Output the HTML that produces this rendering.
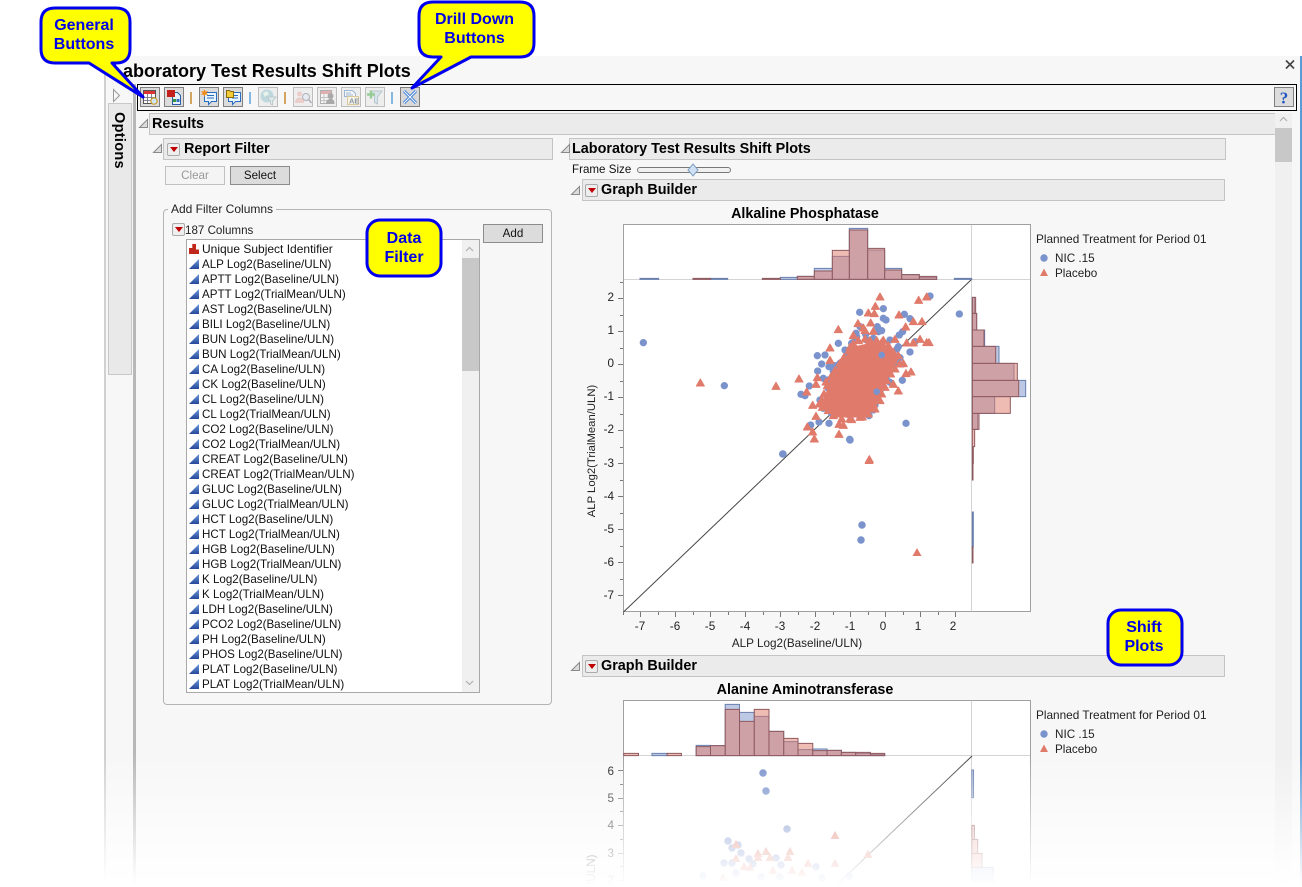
<!DOCTYPE html>
<html><head><meta charset="utf-8"><title>Laboratory Test Results Shift Plots</title>
<style>
html,body{margin:0;padding:0;background:#fff}
body{width:1302px;height:887px;overflow:hidden;position:relative;font:11.6px "Liberation Sans",sans-serif;color:#111}
.a{position:absolute;box-sizing:border-box}
.bar{position:absolute;box-sizing:border-box;background:#ebebeb;border:1px solid #c4c4c4;font-weight:bold;font-size:14.4px;line-height:21px;color:#000;white-space:nowrap}
.rb{position:absolute;width:13px;height:13px;box-sizing:border-box;background:#eee;border:1px solid #aaa;border-radius:2px}
.rb:after{content:"";position:absolute;left:1.5px;top:3px;border:4px solid transparent;border-top:5px solid #c00000;border-bottom:0}
.btn{position:absolute;box-sizing:border-box;text-align:center;font-size:11.6px;line-height:17px;background:#dcdcdc;border:1px solid #8c8c8c;color:#111}
ul{list-style:none;margin:0;padding:0;position:absolute;left:0;top:2px;width:276px}
li{height:15px;line-height:15px;padding-left:15px;position:relative;white-space:nowrap;color:#111}
li:before{content:"";position:absolute;left:2px;top:2px;width:10px;height:10px;background:linear-gradient(#6d9bdc,#27489a);clip-path:polygon(0 100%,100% 0,100% 100%)}
li.n:before{background:#c0281c;clip-path:polygon(0 100%,0 40%,33% 40%,33% 0,70% 0,70% 55%,100% 55%,100% 100%)}
.cl{position:absolute;text-align:center;font:bold 16px/19px "Liberation Sans",sans-serif;color:#0000e6}
svg text{font-family:"Liberation Sans",sans-serif;font-size:11.7px;fill:#222}
</style></head><body>

<!-- window -->
<div class="a" style="left:104px;top:56px;width:1197px;height:831px;background:#f7f7f7;border-left:2px solid #d0d0d0"></div>
<div class="a" style="left:1300px;top:56px;width:1.5px;height:831px;background:#5b9bd5"></div>
<div class="a" style="left:133px;top:84px;width:3px;height:803px;background:#b8b8b8"></div>
<div class="a" style="left:108px;top:103px;width:24px;height:272px;background:#e9e9e9;border:1px solid #c8c8c8"></div>
<div class="a" style="left:96px;top:126px;width:46px;height:18px;transform:rotate(90deg);font:bold 14.5px/18px 'Liberation Sans',sans-serif;letter-spacing:.3px;text-align:center;color:#000">Options</div>

<div class="a" style="left:112px;top:60px;font:bold 18px/22px 'Liberation Sans',sans-serif;color:#000;white-space:nowrap">Laboratory Test Results Shift Plots</div>

<!-- toolbar -->
<div class="a" style="left:137px;top:84px;width:1160px;height:27px;border:1px solid #000;background:#f7f7f7"></div>

<!-- scrollbar -->
<div class="a" style="left:1275px;top:113px;width:17px;height:774px;background:#f0f0f0"></div>
<div class="a" style="left:1275px;top:128px;width:17px;height:34px;background:#c8c8c8"></div>

<!-- headers -->
<div class="bar" style="left:149px;top:113px;width:1126px;height:22px;padding-left:2px;border-right:0">Results</div>
<div class="bar" style="left:163px;top:138px;width:390px;height:22px;padding-left:20px;line-height:20px">Report Filter</div>
<div class="rb" style="left:167px;top:143px"></div>
<div class="bar" style="left:569px;top:138px;width:657px;height:22px;padding-left:2px;line-height:20px">Laboratory Test Results Shift Plots</div>
<div class="a" style="left:572px;top:163px;line-height:14px">Frame Size</div>
<div class="bar" style="left:582px;top:179px;width:643px;height:22px;padding-left:18px">Graph Builder</div>
<div class="rb" style="left:585px;top:184px"></div>
<div class="bar" style="left:582px;top:655px;width:643px;height:22px;padding-left:18px">Graph Builder</div>
<div class="rb" style="left:585px;top:660px"></div>

<!-- filter -->
<div class="btn" style="left:165px;top:166px;width:60px;height:19px;background:#f4f4f4;border-color:#c0c0c0;color:#999">Clear</div>
<div class="btn" style="left:230px;top:166px;width:60px;height:19px">Select</div>
<div class="a" style="left:163px;top:209px;width:389px;height:496px;border:1px solid #b4b4b4;border-radius:4px"></div>
<div class="a" style="left:168px;top:202px;padding:0 3px;background:#f7f7f7;line-height:14px;white-space:nowrap;color:#222;font-size:12px">Add Filter Columns</div>
<div class="rb" style="left:172px;top:223px"></div>
<div class="a" style="left:185px;top:224px;line-height:14px;color:#222">187 Columns</div>
<div class="btn" style="left:483px;top:224px;width:60px;height:19px">Add</div>
<div class="a" style="left:186px;top:239px;width:294px;height:454px;background:#fff;border:1px solid #a8a8a8;overflow:hidden">
<ul>
<li class="n" style="font-size:12px">Unique Subject Identifier</li>
<li>ALP Log2(Baseline/ULN)</li>
<li>APTT Log2(Baseline/ULN)</li>
<li>APTT Log2(TrialMean/ULN)</li>
<li>AST Log2(Baseline/ULN)</li>
<li>BILI Log2(Baseline/ULN)</li>
<li>BUN Log2(Baseline/ULN)</li>
<li>BUN Log2(TrialMean/ULN)</li>
<li>CA Log2(Baseline/ULN)</li>
<li>CK Log2(Baseline/ULN)</li>
<li>CL Log2(Baseline/ULN)</li>
<li>CL Log2(TrialMean/ULN)</li>
<li>CO2 Log2(Baseline/ULN)</li>
<li>CO2 Log2(TrialMean/ULN)</li>
<li>CREAT Log2(Baseline/ULN)</li>
<li>CREAT Log2(TrialMean/ULN)</li>
<li>GLUC Log2(Baseline/ULN)</li>
<li>GLUC Log2(TrialMean/ULN)</li>
<li>HCT Log2(Baseline/ULN)</li>
<li>HCT Log2(TrialMean/ULN)</li>
<li>HGB Log2(Baseline/ULN)</li>
<li>HGB Log2(TrialMean/ULN)</li>
<li>K Log2(Baseline/ULN)</li>
<li>K Log2(TrialMean/ULN)</li>
<li>LDH Log2(Baseline/ULN)</li>
<li>PCO2 Log2(Baseline/ULN)</li>
<li>PH Log2(Baseline/ULN)</li>
<li>PHOS Log2(Baseline/ULN)</li>
<li>PLAT Log2(Baseline/ULN)</li>
<li>PLAT Log2(TrialMean/ULN)</li>
</ul>
<div class="a" style="left:275px;top:0;width:17px;height:452px;background:#f0f0f0"></div>
<div class="a" style="left:275px;top:18px;width:17px;height:113px;background:#c8c8c8"></div>
</div>

<svg class="a" style="left:0;top:0" width="1302" height="887" viewBox="0 0 1302 887">
<!-- disclosure triangles -->
<g fill="#dcdcdc" stroke="#8a8a8a" stroke-width="1">
<path d="M139.500 127.500l8-8v8z"/><path d="M153.500 152.500l8-8v8z"/><path d="M561.500 152.500l8-8v8z"/><path d="M571.500 194.500l8-8v8z"/><path d="M571.500 670.500l8-8v8z"/>
</g>
<path d="M113.500 89.500l6 6-6 6z" fill="#f7f7f7" stroke="#999"/>
<!-- chevrons -->
<path d="M1280 121l3.500-3.500 3.500 3.500" fill="none" stroke="#b0b0b0" stroke-width="1.200"/>
<path d="M466 251l3.500-3.500 3.500 3.500M466 681l3.500 3.500 3.500-3.500" fill="none" stroke="#b0b0b0" stroke-width="1.200"/>
<!-- close -->
<path d="M1286 60.500l8 8M1294 60.500l-8 8" stroke="#444" stroke-width="1.600"/>
<!-- slider -->
<rect x="637.500" y="167.500" width="93" height="5" rx="2.500" fill="#f0f0f0" stroke="#777"/>
<path d="M693 164l5 6-5 6-5-6z" fill="#cfe0f2" stroke="#7f9fc4"/>

<!-- separators -->
<g stroke-width="1.500"><path d="M191 92v12M285 92v12" stroke="#c98a2f"/><path d="M250 92v12M392 92v12" stroke="#5fa3dc"/></g>

<!-- toolbar icons -->
<g transform="translate(140 87)"><rect x=".5" y=".5" width="19" height="19" fill="#dcdcdc" stroke="#7f7f7f"/>
<rect x="3.500" y="3.500" width="12" height="13" fill="#fff" stroke="#555"/><rect x="4" y="4" width="11" height="3" fill="#d33"/><path d="M7.500 7v9M11.500 7v9M4 10.500h11M4 13.500h11" stroke="#667" stroke-width=".8"/><circle cx="14" cy="14" r="3.200" fill="#cfe6fa" stroke="#d09a20" stroke-width="1.200"/></g>
<g transform="translate(164 87)"><rect x=".5" y=".5" width="19" height="19" fill="#dcdcdc" stroke="#7f7f7f"/>
<path d="M8.500 5.500h5l3 3v9h-8z" fill="#e6f1fb" stroke="#2a5ca8"/><rect x="3" y="3" width="8" height="7" fill="#c4201c"/><rect x="9" y="12" width="3" height="3" fill="#3a9a3a"/><rect x="12.500" y="12" width="3" height="3" fill="#2f6fc0"/></g>
<g transform="translate(199 87)"><rect x=".5" y=".5" width="19" height="19" fill="#dcdcdc" stroke="#7f7f7f"/>
<path d="M5.500 5.500h12v9h-5l-3 3v-3h-4z" fill="#eaf6ff" stroke="#2a6cc0"/><path d="M8 8.500h7M8 11h7" stroke="#2a6cc0"/><path d="M5.500 2l1 2.500 2.500-.5-1.500 2 1.500 2-2.500-.5-1 2.500-1-2.500-2.500.5 1.500-2-1.500-2 2.500.5z" fill="#ef8a1c"/></g>
<g transform="translate(223 87)"><rect x=".5" y=".5" width="19" height="19" fill="#dcdcdc" stroke="#7f7f7f"/>
<path d="M5.500 5.500h12v9h-5l-3 3v-3h-4z" fill="#eaf6ff" stroke="#2a6cc0"/><path d="M9 8.500h6M9 11h6" stroke="#2a6cc0"/><path d="M3.500 3.500h3l1 1h3v6h-7z" fill="#f2cd38" stroke="#8a6a10"/></g>
<g transform="translate(258 87)"><rect x=".5" y=".5" width="19" height="19" fill="#eee" stroke="#bdbdbd"/><g opacity=".5">
<circle cx="9" cy="9" r="6.500" fill="#8fc4cf"/><path d="M5 6l4-2 2 3-4 3zM10 12l3-2 1 3z" fill="#e8f4ea"/><path d="M9 10h9l-3.500 4v4l-2-1v-3z" fill="#d8e6f0" stroke="#8aa"/></g></g>
<g transform="translate(293 87)"><rect x=".5" y=".5" width="19" height="19" fill="#eee" stroke="#bdbdbd"/><g opacity=".45">
<circle cx="6.500" cy="7" r="2.500" fill="#e8a8a0"/><path d="M2 16c0-4 2-5.500 4.500-5.500s4 1 4.500 3v2.500z" fill="#e8a8a0"/><circle cx="13" cy="10" r="3.500" fill="#dde9f5" stroke="#667"/><path d="M15.500 12.500l3 3.500" stroke="#667" stroke-width="1.500"/></g></g>
<g transform="translate(317 87)"><rect x=".5" y=".5" width="19" height="19" fill="#eee" stroke="#bdbdbd"/><g opacity=".4">
<rect x="3.500" y="3.500" width="11" height="13" fill="#fff" stroke="#555"/><rect x="4" y="4" width="10" height="3" fill="#c55"/><path d="M7 7v9M4 10.500h10M4 13.500h10" stroke="#888"/><circle cx="13.500" cy="9" r="3" fill="#444"/><path d="M9 17c0-4 2-5 4.500-5s4 1 4 5z" fill="#444"/></g></g>
<g transform="translate(341 87)"><rect x=".5" y=".5" width="19" height="19" fill="#eee" stroke="#bdbdbd"/><g opacity=".5">
<path d="M3.500 3.500h8l3 3v3h-11z" fill="#fff" stroke="#4a7fc0"/><path d="M5 6h5M5 8h7" stroke="#4a7fc0"/><rect x="6.500" y="9.500" width="11" height="8" fill="#fff6dc" stroke="#caa550"/></g>
<text x="8" y="16.500" style="font-size:7.500px;font-weight:bold;fill:#8b98a8">AE</text></g>
<g transform="translate(365 87)"><rect x=".5" y=".5" width="19" height="19" fill="#eee" stroke="#bdbdbd"/><g opacity=".55">
<path d="M5 4h12l-4.500 6v7l-3-1.500V10z" fill="#c8dde8" stroke="#8aa6b4"/><path d="M6 3.500v8M2 7.500h8" stroke="#4fb04f" stroke-width="2.400"/></g></g>
<g transform="translate(400 87)"><rect x=".5" y=".5" width="19" height="19" fill="#d8d8d8" stroke="#7f7f7f"/>
<path d="M4 4l12 12M16 4L4 16" stroke="#2f78d4" stroke-width="3"/><path d="M4 4l12 12M16 4L4 16" stroke="#f2f8ff" stroke-width="1.200"/></g>
<g transform="translate(1274 87)"><rect x=".5" y=".5" width="19" height="19" fill="#dcdcdc" stroke="#7f7f7f"/>
<text x="10" y="16.500" text-anchor="middle" style="font-size:17px;font-weight:bold;fill:#2456c0;font-family:'Liberation Serif',serif">?</text></g>

<!-- PLOT 1 -->
<text x="805" y="218" text-anchor="middle" style="font-size:14.300px;font-weight:bold;fill:#000">Alkaline Phosphatase</text>
<rect x="623.500" y="224.500" width="407" height="387" fill="#fff" stroke="#a0a0a0"/>
<path d="M624 279.500h406M971.500 225v386" stroke="#d4d4d4"/>
<path d="M623.500 612L972 279" stroke="#444" stroke-width="1"/>
<path fill="none" stroke="#777" d="M618 298.500h5M618 331.500h5M618 364.500h5M618 397.500h5M618 430.500h5M618 463.500h5M618 496.500h5M618 529.500h5M618 562.500h5M618 595.500h5M620 282.500h3M620 315.500h3M620 348.500h3M620 381.500h3M620 414.500h3M620 447.500h3M620 480.500h3M620 513.500h3M620 546.500h3M620 579.500h3M640.500 612v5M675.500 612v5M710.500 612v5M745.500 612v5M780.500 612v5M815.500 612v5M850.500 612v5M885.500 612v5M920.500 612v5M955.500 612v5M623.500 612v3M658.500 612v3M693.500 612v3M728.500 612v3M763.500 612v3M798.500 612v3M833.500 612v3M868.500 612v3M903.500 612v3M938.500 612v3"/>
<g text-anchor="end"><text x="614" y="301">2</text><text x="614" y="334">1</text><text x="614" y="367">0</text><text x="614" y="400">-1</text><text x="614" y="433">-2</text><text x="614" y="467">-3</text><text x="614" y="500">-4</text><text x="614" y="533">-5</text><text x="614" y="566">-6</text><text x="614" y="599">-7</text></g>
<g text-anchor="middle"><text x="640" y="630">-7</text><text x="675" y="630">-6</text><text x="710" y="630">-5</text><text x="745" y="630">-4</text><text x="780" y="630">-3</text><text x="815" y="630">-2</text><text x="850" y="630">-1</text><text x="883" y="630">0</text><text x="918" y="630">1</text><text x="953" y="630">2</text>
<text x="797" y="647">ALP Log2(Baseline/ULN)</text>
<text transform="translate(595 451) rotate(-90)" style="font-size:11.300px">ALP Log2(TrialMean/ULN)</text></g>

<g transform="translate(620 200) scale(.33333)">
<!-- top hist -->
<path fill="#7b93c9" fill-opacity=".5" stroke="#6a7fae" stroke-width="3" d="M60 235h56v3h-56zM272 235h51v3h-51zM481 232h51v6h-51zM532 229h51v9h-51zM583 205h54v33h-54zM637 169h51v69h-51zM688 85h55v153h-55zM743 150h51v88h-51zM794 205h51v33h-51zM845 224h53v14h-53zM898 232h52v6h-52zM1003 235h52v3h-52z"/>
<path fill="#e07a67" fill-opacity=".5" stroke="#8f5a60" stroke-width="3" d="M219 235h53v3h-53zM427 235h54v3h-54zM532 229h51v9h-51zM583 213h54v25h-54zM637 151h51v87h-51zM688 90h55v148h-55zM743 145h51v93h-51zM794 210h51v28h-51zM845 224h53v14h-53zM898 229h52v9h-52z"/>
<!-- right hist -->
<path fill="#7b93c9" fill-opacity=".5" stroke="#6a7fae" stroke-width="3" d="M1057 292h7v48h-7zM1057 340h13v50h-13zM1057 390h37v49h-37zM1057 439h80v51h-80zM1057 490h125v51h-125zM1057 541h160v49h-160zM1057 590h67v50h-67zM1057 640h16v48h-16zM1057 936h3v105h-3z"/>
<path fill="#e07a67" fill-opacity=".5" stroke="#8f5a60" stroke-width="3" d="M1057 292h10v48h-10zM1057 340h13v50h-13zM1057 390h35v49h-35zM1057 439h70v51h-70zM1057 490h135v51h-135zM1057 541h139v49h-139zM1057 590h114v50h-114zM1057 640h20v48h-20zM1057 688h7v52h-7zM1057 740h3v50h-3zM1057 790h2v50h-2zM1057 1041h2v48h-2z"/>
<!-- blue points -->
<path fill="none" stroke="#7b93cc" stroke-width="22" stroke-linecap="round" d="M70 428h0M313 557h0M488 762h0M930 288h0M1018 342h0M719 337h0M790 326h0M853 343h0M870 356h0M790 355h0M798 360h0M772 380h0M785 392h0M655 430h0M737 403h0M708 400h0M592 467h0M615 465h0M605 492h0M593 513h0M627 500h0M645 497h0M568 558h0M543 583h0M555 587h0M597 666h0M572 675h0M627 670h0M689 718h0M858 670h0M847 541h0M870 456h0M838 405h0M848 395h0M831 447h0M840 473h0M610 535h0M780 573h0M765 615h0M747 647h0M800 540h0M810 547h0M690 455h0M715 465h0M740 460h0M770 450h0M705 420h0M710 410h0M775 395h0M740 420h0M680 465h0M635 545h0M625 565h0M632 630h0M772 575h0M790 510h0M830 490h0M885 425h0M600 600h0M625 540h0M640 515h0M660 490h0M675 450h0M695 430h0M800 510h0M790 560h0M760 630h0M720 650h0M650 620h0M635 640h0M610 625h0M770 600h0M815 490h0M835 440h0M720 380h0M760 415h0M810 420h0"/>
<path d="M605 620L635 525L670 478L700 440L755 428L805 440L835 478L805 525L782 590L750 640L690 655L635 645z" fill="#e07b6c"/>
<!-- salmon points -->
<path fill="#e07b6c" stroke="#e07b6c" stroke-width="3" stroke-linejoin="round" d="M241 537l12 21h-24zM468 547l12 21h-24zM537 525l12 21h-24zM780 279l12 21h-24zM896 289l12 21h-24zM920 279l12 21h-24zM766 307l12 21h-24zM745 327l12 21h-24zM763 329l12 21h-24zM837 333l12 21h-24zM880 353l12 21h-24zM906 353l12 21h-24zM714 359l12 21h-24zM752 357l12 21h-24zM655 377l12 21h-24zM857 369l12 21h-24zM730 372l12 21h-24zM760 382l12 21h-24zM630 432l12 21h-24zM900 406l12 21h-24zM880 417l12 21h-24zM920 416l12 21h-24zM927 416l12 21h-24zM825 406l12 21h-24zM860 417l12 21h-24zM790 409l12 21h-24zM630 469l12 21h-24zM850 479l12 21h-24zM858 509l12 21h-24zM873 504l12 21h-24zM820 541l12 21h-24zM835 561l12 21h-24zM592 521l12 21h-24zM588 541l12 21h-24zM618 534l12 21h-24zM560 564l12 21h-24zM578 604l12 21h-24zM588 637l12 21h-24zM562 669l12 21h-24zM578 684l12 21h-24zM583 705l12 21h-24zM657 691l12 21h-24zM657 661l12 21h-24zM670 664l12 21h-24zM695 647l12 21h-24zM727 639l12 21h-24zM748 767l12 21h-24zM690 430l12 21h-24zM755 420l12 21h-24zM775 425l12 21h-24zM810 440l12 21h-24zM820 470l12 21h-24zM800 485l12 21h-24zM780 540l12 21h-24zM770 580l12 21h-24zM760 600l12 21h-24zM640 510l12 21h-24zM620 580l12 21h-24zM610 600l12 21h-24zM650 630l12 21h-24zM700 630l12 21h-24zM740 625l12 21h-24zM675 485l12 21h-24zM660 500l12 21h-24zM605 590l12 21h-24zM612 570l12 21h-24zM622 545l12 21h-24zM632 520l12 21h-24zM645 500l12 21h-24zM660 478l12 21h-24zM672 460l12 21h-24zM688 440l12 21h-24zM700 420l12 21h-24zM715 410l12 21h-24zM735 405l12 21h-24zM750 410l12 21h-24zM770 410l12 21h-24zM785 415l12 21h-24zM805 425l12 21h-24zM820 445l12 21h-24zM835 455l12 21h-24zM840 480l12 21h-24zM825 495l12 21h-24zM812 510l12 21h-24zM800 530l12 21h-24zM795 550l12 21h-24zM785 570l12 21h-24zM780 590l12 21h-24zM765 615l12 21h-24zM745 630l12 21h-24zM720 640l12 21h-24zM690 645l12 21h-24zM665 645l12 21h-24zM640 635l12 21h-24zM625 620l12 21h-24zM607 610l12 21h-24zM655 615l12 21h-24zM598 600l12 21h-24zM700 395l12 21h-24zM735 380l12 21h-24z"/>
<path fill="none" stroke="#7b93cc" stroke-width="20" stroke-linecap="round" d="M770 575h0M785 465h0"/>
</g>
<!-- lower plot1 points -->
<path fill="none" stroke="#7b93cc" stroke-width="7.500" stroke-linecap="round" d="M783 454h0M862 525h0M861 540h0M850 440h0"/>
<path fill="#e07b6c" d="M869 456l4.500 8h-9zM917 548l4.500 8h-9z"/>

<!-- legends -->
<text x="1036" y="243" style="font-size:11.800px">Planned Treatment for Period 01</text>
<circle cx="1044" cy="258" r="3.700" fill="#7b93cc"/><text x="1055" y="262">NIC .15</text>
<path d="M1044 268.500l4 7.500h-8z" fill="#e07b6c"/><text x="1055" y="277">Placebo</text>
<text x="1036" y="719" style="font-size:11.800px">Planned Treatment for Period 01</text>
<circle cx="1044" cy="734" r="3.700" fill="#7b93cc"/><text x="1055" y="738">NIC .15</text>
<path d="M1044 744.500l4 7.500h-8z" fill="#e07b6c"/><text x="1055" y="753">Placebo</text>

<!-- PLOT 2 -->
<text x="805" y="694" text-anchor="middle" style="font-size:14.300px;font-weight:bold;fill:#000">Alanine Aminotransferase</text>
<path d="M623.500 887V700.500H1030.500V887z" fill="#fff" stroke="#a0a0a0"/>
<path d="M624 755.500h406M971.500 701v186" stroke="#d4d4d4"/>
<path d="M972 756L834.500 887" stroke="#444"/>
<path fill="none" stroke="#777" d="M618 770.500h5M618 798.500h5M618 825.500h5M618 853.500h5M618 880.500h5M620 784.500h3M620 811.500h3M620 839.500h3M620 866.500h3"/>
<g text-anchor="end"><text x="614" y="775">6</text><text x="614" y="802">5</text><text x="614" y="829">4</text><text x="614" y="857">3</text><text x="614" y="884">2</text></g>
<text transform="translate(595 885) rotate(-90)">/ULN)</text>
<g transform="translate(580 640) scale(.42088 .33333)">
<path fill="#7b93c9" fill-opacity=".5" stroke="#6a7fae" stroke-width="1" vector-effect="non-scaling-stroke" d="M171 340h36v7h-36zM276 316h34v31h-34zM310 317h35v30h-35zM345 193h34v154h-34zM379 217h35v130h-35zM414 229h35v118h-35zM449 274h35v73h-35zM484 305h34v42h-34zM518 329h35v18h-35zM553 327h34v20h-34zM587 331h34v16h-34zM621 337h34v10h-34zM655 340h35v7h-35zM690 343h34v4h-34zM931 390h4v83h-4zM931 682h51v42h-51z"/>
<path fill="#e07a67" fill-opacity=".5" stroke="#8f5a60" stroke-width="1" vector-effect="non-scaling-stroke" d="M104 340h35v7h-35zM207 340h34v7h-34zM276 320h34v27h-34zM310 317h35v30h-35zM345 208h34v139h-34zM379 244h35v103h-35zM414 208h35v139h-35zM449 274h35v73h-35zM484 295h34v52h-34zM518 310h35v37h-35zM553 332h34v15h-34zM587 331h34v16h-34zM621 337h34v10h-34zM655 337h35v10h-35zM690 340h34v7h-34zM931 556h6v42h-6zM931 598h14v42h-14zM931 640h24v42h-24z"/>
</g>
<path fill="none" stroke="#7b93cc" stroke-width="7.500" stroke-linecap="round" d="M763 773h0M766 791h0M787 829h0M728 841h0M732 848h0M738 845h0M741 853h0M724 863h0M732 863h0M749 859h0M776 858h0M781 865h0M816 867h0M703 876h0M822 878h0M849 876h0M761 877h0M780 877h0M753 864h0M736 873h0"/>
<path fill="#e07b6c" d="M835 831l4.500 8h-9zM868 850l4.500 8h-9zM835 859l4.500 8h-9zM808 859l4.500 8h-9zM790 847l4.500 8h-9zM766 847l4.500 8h-9zM758 849l4.500 8h-9zM736 840l4.500 8h-9zM736 854l4.500 8h-9zM770 853l4.500 8h-9zM788 853l4.500 8h-9zM792 866l4.500 8h-9zM802 868l4.500 8h-9zM723 873l4.500 8h-9zM750 863l4.500 8h-9zM744 862l4.500 8h-9zM773 866l4.500 8h-9zM758 853l4.500 8h-9z"/>
</svg>

<!-- bottom fade -->
<div class="a" style="left:0;top:755px;width:1302px;height:132px;background:linear-gradient(rgba(255,255,255,0),rgba(255,255,255,.93) 90%,#fff)"></div>

<!-- callouts -->
<svg class="a" style="left:0;top:0" width="1302" height="887" viewBox="0 0 1302 887">
<g fill="#ff0" stroke="#0000ee" stroke-width="3" stroke-linejoin="round">
<path d="M55 8H116Q130 8 130 22V49Q130 63 116 63H112L143 97L89 63H55Q41 63 41 49V22Q41 8 55 8z"/>
<path d="M433 2H520Q534 2 534 16V43Q534 57 520 57H471L412 88L441 57H433Q419 57 419 43V16Q419 2 433 2z"/>
<rect x="367" y="220" width="74" height="56" rx="13"/>
<rect x="1108" y="610" width="74" height="55" rx="13"/>
</g>
</svg>
<div class="cl" style="left:40px;top:16px;width:88px">General<br>Buttons</div>
<div class="cl" style="left:417px;top:10px;width:115px">Drill Down<br>Buttons</div>
<div class="cl" style="left:367px;top:229px;width:74px">Data<br>Filter</div>
<div class="cl" style="left:1107px;top:618px;width:74px">Shift<br>Plots</div>
</body></html>
